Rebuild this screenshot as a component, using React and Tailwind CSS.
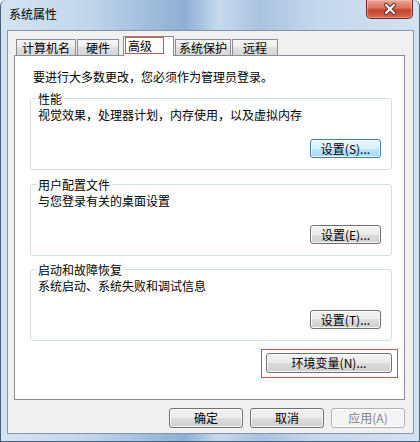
import React from "react";

const FONT = "font-['Noto_Sans_CJK_SC',sans-serif]";

const Button = ({ children, variant = "normal", className = "" }) => {
  const styles = {
    normal:
      "border-[#707070] bg-[linear-gradient(#f2f2f2,#ebebeb_50%,#dddddd_50%,#cfcfcf)] text-black",
    focused:
      "border-[#3c7fb1] bg-[linear-gradient(#eaf6fd,#d9f0fc_50%,#bee6fd_50%,#a7d9f5)] text-black",
    disabled: "border-[#adb2b5] bg-[#f4f4f4] text-[#838383]",
  };
  return (
    <div
      className={`flex items-center justify-center rounded-[3px] border text-[12px] leading-none shadow-[inset_0_0_0_1px_rgba(255,255,255,0.8)] ${styles[variant]} ${className}`}
    >
      {children}
    </div>
  );
};

const GroupBox = ({ label, text, button, buttonVariant, className = "" }) => (
  <div
    className={`relative ml-[15px] flex h-[72px] w-[362px] flex-col rounded-[3px] border border-[#d5dfe5] ${className}`}
  >
    <span className="absolute -top-[7px] left-[5px] bg-white px-[2px] text-[12px] leading-[14px]">
      {label}
    </span>
    <div className="pl-[7px] pt-[9px] text-[12px] leading-[14px]">{text}</div>
    <Button
      variant={buttonVariant}
      className="mr-[10px] mt-[17px] h-[19px] w-[71px] self-end"
    >
      {button}
    </Button>
  </div>
);

const tabs = [
  { name: "计算机名", w: "w-[60px]", ml: "ml-0" },
  { name: "硬件", w: "w-[42px]", ml: "ml-px" },
  { name: "高级", w: "w-[51px]", ml: "ml-[4px]", active: true },
  { name: "系统保护", w: "w-[56px]", ml: "ml-px" },
  { name: "远程", w: "w-[46px]", ml: "ml-px" },
];

const App = () => {
  return (
    <div
      className={`${FONT} flex h-[442px] w-[420px] flex-col overflow-hidden rounded-t-[6px] border-x border-b border-[#46607e] bg-[linear-gradient(90deg,#d4e3f2_0%,#c3d7ec_20%,#9ab9da_38%,#8eafd4_44%,#c6d9ed_52%,#a9c3df_62%,#c4d7ec_75%,#d3e2f1_100%)] text-black`}
    >
      {/* title bar */}
      <div className="flex h-[30px] shrink-0 items-start justify-between">
        <span className="pl-[8px] pt-[7px] text-[12px] leading-[14px]">系统属性</span>
        <div className="mr-[6px] flex h-[19px] w-[47px] items-center justify-center rounded-b-[5px] border border-t-0 border-[#6f2a20] bg-[linear-gradient(#e9a898,#d8715d_45%,#c5452d_55%,#d26a4f)] shadow-[inset_0_0_0_1px_rgba(255,200,190,0.5)]">
          <svg width="14" height="12" viewBox="0 0 14 12">
            <path d="M3 2 L11 10 M11 2 L3 10" stroke="#5a1f18" strokeWidth="4" strokeLinecap="round" />
            <path d="M3 2 L11 10 M11 2 L3 10" stroke="#ffffff" strokeWidth="2.4" strokeLinecap="round" />
          </svg>
        </div>
      </div>

      {/* client area */}
      <div className="ml-[6px] flex h-[404px] w-[407px] shrink-0 flex-col border border-[#8296ad] bg-[#f0f0f0]">
        {/* tabs */}
        <div className="mt-[5px] flex h-[19px] items-end pl-[8px]">
          {tabs.map((t) =>
            t.active ? (
              <div
                key={t.name}
                className={`relative z-10 -mb-px flex h-[20px] ${t.w} ${t.ml} items-start border border-b-0 border-[#898c95] bg-white`}
              >
                <span className="ml-[2px] mt-px flex h-[15px] w-[37px] items-center justify-start pl-[2px] text-[12px] leading-none shadow-[0_0_0_1px_#d9504a]">
                  {t.name}
                </span>
              </div>
            ) : (
              <div
                key={t.name}
                className={`flex h-[16px] ${t.w} ${t.ml} items-center justify-center border border-b-0 border-[#898c95] bg-[linear-gradient(#f6f6f6,#ececec_50%,#e0e0e0_50%,#d6d6d6)] text-[12px] leading-none`}
              >
                {t.name}
              </div>
            )
          )}
        </div>

        {/* panel */}
        <div className="ml-[6px] flex h-[345px] w-[391px] flex-col border border-[#898c95] bg-white">
          <div className="pl-[18px] pt-[14px] text-[12px] leading-[14px]">
            要进行大多数更改，您必须作为管理员登录。
          </div>
          <GroupBox
            className="mt-[14px]"
            label="性能"
            text="视觉效果，处理器计划，内存使用，以及虚拟内存"
            button="设置(S)..."
            buttonVariant="focused"
          />
          <GroupBox
            className="mt-[14px]"
            label="用户配置文件"
            text="与您登录有关的桌面设置"
            button="设置(E)..."
          />
          <GroupBox
            className="mt-[13px]"
            label="启动和故障恢复"
            text="系统启动、系统失败和调试信息"
            button="设置(T)..."
          />
          <div className="mr-[7px] mt-[9px] flex h-[27px] w-[135px] items-start self-end bg-white pl-[4px] pt-[3px] shadow-[0_0_0_1px_#d9504a]">
            <Button className="h-[20px] w-[126px]">环境变量(N)...</Button>
          </div>
        </div>

        {/* bottom buttons */}
        <div className="mt-[8px] flex justify-end gap-[7px] pr-[8px]">
          <Button className="h-[20px] w-[74px]">确定</Button>
          <Button className="h-[20px] w-[74px]">取消</Button>
          <Button variant="disabled" className="h-[20px] w-[74px]">
            应用(A)
          </Button>
        </div>
      </div>
    </div>
  );
};

export default App;
